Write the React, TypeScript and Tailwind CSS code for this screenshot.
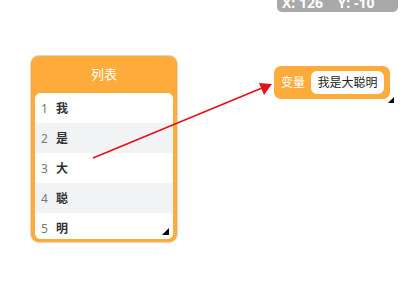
import React from "react";

const cjk = { fontFamily: '"Noto Sans", "Noto Sans CJK SC", sans-serif' };

const rows = ["我", "是", "大", "聪", "明"];

export default function App() {
  return (
    <div className="relative w-[402px] h-[308px] bg-white overflow-hidden" style={cjk}>
      {/* coordinates label */}
      <div className="absolute left-[277px] top-[-8px] w-[121px] h-[20px] rounded-[5px] bg-[#a9a9a9] flex items-end pl-[5px] pb-[1px]">
        <span className="text-white font-bold text-[14px] leading-[16px]" style={{ fontFamily: '"Open Sans", sans-serif' }}>
          X: 126&nbsp;&nbsp;&nbsp;&nbsp;Y: -10
        </span>
      </div>

      {/* list monitor */}
      <div className="absolute left-[30px] top-[55px] w-[148px] h-[188px] rounded-[9px] bg-[#fdab3a] border border-[#e3d6c4] flex flex-col">
        <div className="h-[37px] shrink-0 flex items-center justify-center text-white text-[13px]">列表</div>
        <div className="relative flex-1 mx-[4px] mb-[3px] bg-white rounded-[6px] overflow-hidden flex flex-col">
          {rows.map((c, i) => (
            <div
              key={i}
              className={`h-[30px] shrink-0 flex items-center pl-[6px] pt-[2px] ${i % 2 === 1 ? "bg-[#f2f3f5]" : "bg-white"}`}
            >
              <span className="w-[15px] text-[12px] text-[#777]">{i + 1}</span>
              <span className="text-[12px] font-bold text-[#333]">{c}</span>
            </div>
          ))}
          <div className="absolute right-[4px] bottom-[4px] w-0 h-0 border-l-[7px] border-l-transparent border-b-[7px] border-b-black" />
        </div>
      </div>

      {/* variable monitor */}
      <div className="absolute left-[274px] top-[66px] w-[116px] h-[33px] rounded-[7px] bg-[#fdab3a] flex items-center pl-[7px] gap-[6px]">
        <span className="text-white text-[12px]">变量</span>
        <div className="w-[73px] h-[23px] bg-white rounded-[6px] flex items-center justify-center text-[12px] text-[#222]">
          我是大聪明
        </div>
      </div>
      <div className="absolute left-[388px] top-[97px] w-0 h-0 border-l-[6px] border-l-transparent border-b-[6px] border-b-black" />

      {/* arrow */}
      <svg className="absolute left-0 top-0" width="402" height="308">
        <line x1="93" y1="158" x2="262" y2="88" stroke="#e0121a" strokeWidth="1.6" />
        <polygon points="272,84 259,83 264,95" fill="#e0121a" />
      </svg>
    </div>
  );
}
